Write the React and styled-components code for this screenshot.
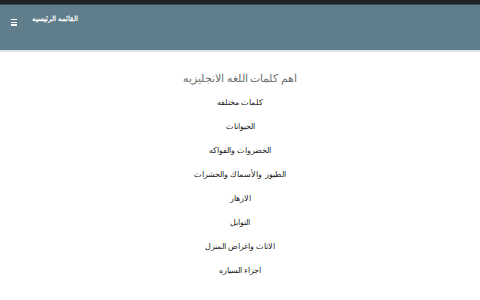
import styled, { createGlobalStyle } from 'styled-components';

const GlobalStyle = createGlobalStyle`
  html, body {
    margin: 0;
    padding: 0;
    background: #ffffff;
    font-family: "Liberation Sans", Arial, sans-serif;
  }
`;

const Page = styled.div`
  width: 480px;
  height: 300px;
  overflow: hidden;
  display: flex;
  flex-direction: column;
`;

const StatusBar = styled.div`
  height: 4px;
  background: #1f2226;
  border-bottom: 1px solid #3d4a50;
`;

const Toolbar = styled.div`
  height: 47px;
  background: #607d8b;
  display: flex;
  align-items: flex-start;
  padding: 9px 0 0 11px;
  box-sizing: border-box;
  gap: 15px;
  border-bottom: 2px solid #dce6e9;
`;

const MenuButton = styled.div`
  width: 6px;
  display: flex;
  flex-direction: column;
  gap: 1.5px;
  padding-top: 5px;

  span {
    height: 1.2px;
    background: #ffffff;
  }
`;

const Title = styled.div`
  color: #ffffff;
  font-size: 7px;
  font-weight: bold;
  direction: rtl;
  line-height: 10px;
`;

const Content = styled.div`
  display: flex;
  flex-direction: column;
  align-items: center;
  padding-top: 19px;
`;

const Heading = styled.div`
  color: #707070;
  font-size: 10.5px;
  direction: rtl;
  line-height: 14px;
  margin-bottom: 13px;
`;

const Item = styled.div`
  color: #1a1a1a;
  font-size: 8px;
  direction: rtl;
  height: 24px;
  line-height: 10px;
`;

const items = [
  'كلمات مختلفه',
  'الحيوانات',
  'الخضروات والفواكه',
  'الطيور والأسماك والحشرات',
  'الازهار',
  'التوابل',
  'الاثاث واغراض المنزل',
  'اجزاء السياره',
];

export default function App() {
  return (
    <Page>
      <GlobalStyle />
      <StatusBar />
      <Toolbar>
        <MenuButton>
          <span />
          <span />
          <span />
        </MenuButton>
        <Title>القائمه الرئيسيه</Title>
      </Toolbar>
      <Content>
        <Heading>اهم كلمات اللغه الانجليزيه</Heading>
        {items.map((t) => (
          <Item key={t}>{t}</Item>
        ))}
      </Content>
    </Page>
  );
}
